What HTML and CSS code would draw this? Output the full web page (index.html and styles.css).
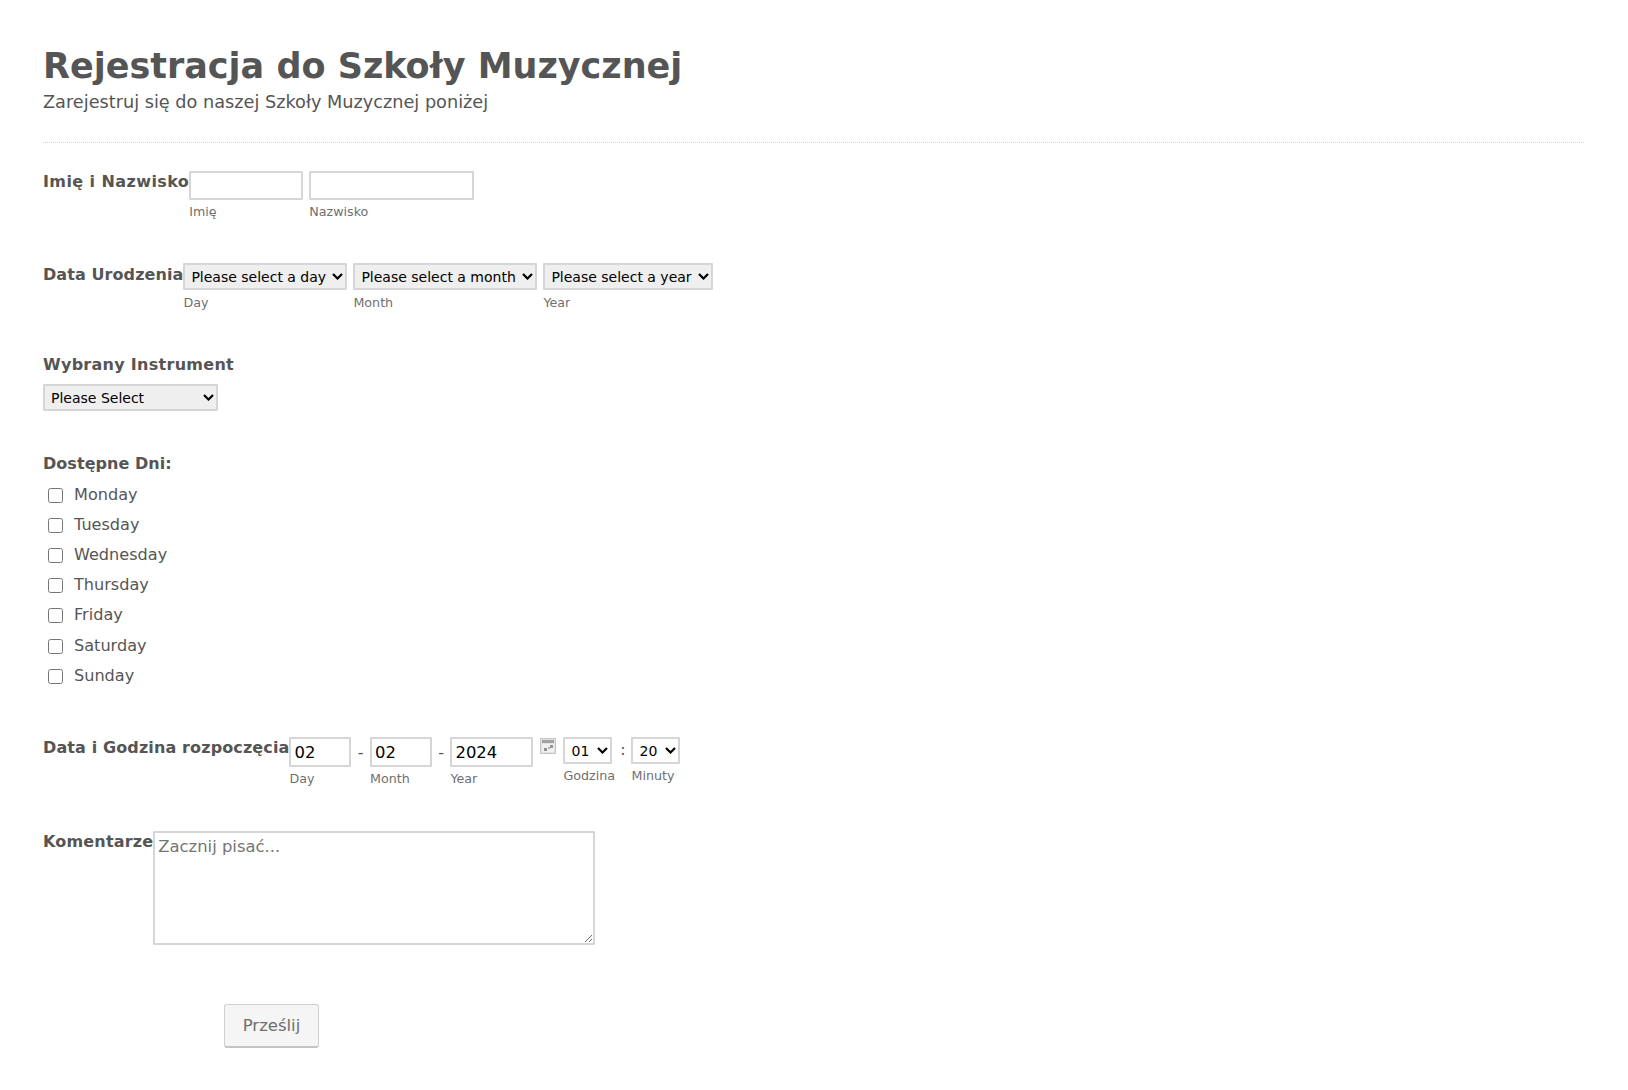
FILE: index.html
```html
<!DOCTYPE html>
<html lang="pl">
<head>
<meta charset="utf-8">
<title>Rejestracja do Szkoły Muzycznej</title>
<link rel="stylesheet" href="styles.css">
</head>
<body>
<form class="form">
  <header class="head">
    <h1 class="title">Rejestracja do Szkoły Muzycznej</h1>
    <p class="subtitle">Zarejestruj się do naszej Szkoły Muzycznej poniżej</p>
  </header>

  <div class="row row-name">
    <label class="label ls-name">Imię i Nazwisko</label>
    <div class="fields gap-6">
      <div class="field"><input class="text w-114" type="text"><span class="sub">Imię</span></div>
      <div class="field"><input class="text w-165" type="text"><span class="sub">Nazwisko</span></div>
    </div>
  </div>

  <div class="row row-birth">
    <label class="label label-low ls-birth">Data Urodzenia</label>
    <div class="fields gap-6">
      <div class="field"><select class="sel w-164"><option>Please select a day</option></select><span class="sub">Day</span></div>
      <div class="field"><select class="sel w-184"><option>Please select a month</option></select><span class="sub">Month</span></div>
      <div class="field"><select class="sel w-170"><option>Please select a year</option></select><span class="sub">Year</span></div>
    </div>
  </div>

  <div class="block block-instr">
    <label class="label ls-instr">Wybrany Instrument</label>
    <select class="sel sel-instr"><option>Please Select</option></select>
  </div>

  <div class="block block-days">
    <label class="label ls-days">Dostępne Dni:</label>
    <ul class="days">
      <li class="day"><input class="check" type="checkbox"><span>Monday</span></li>
      <li class="day"><input class="check" type="checkbox"><span>Tuesday</span></li>
      <li class="day"><input class="check" type="checkbox"><span>Wednesday</span></li>
      <li class="day"><input class="check" type="checkbox"><span>Thursday</span></li>
      <li class="day"><input class="check" type="checkbox"><span>Friday</span></li>
      <li class="day"><input class="check" type="checkbox"><span>Saturday</span></li>
      <li class="day"><input class="check" type="checkbox"><span>Sunday</span></li>
    </ul>
  </div>

  <div class="row row-date">
    <label class="label ls-date">Data i Godzina rozpoczęcia</label>
    <div class="fields">
      <div class="field"><input class="text date w-62" type="text" value="02"><span class="sub">Day</span></div>
      <span class="dash">-</span>
      <div class="field"><input class="text date w-62" type="text" value="02"><span class="sub">Month</span></div>
      <span class="dash">-</span>
      <div class="field"><input class="text date w-83" type="text" value="2024"><span class="sub">Year</span></div>
      <svg class="cal" viewBox="0 0 16 16" aria-hidden="true">
        <rect x="0" y="0" width="16" height="16" rx="1" fill="#c4c4c4"/>
        <rect x="1" y="1" width="14" height="14" fill="#e2e2e2"/>
        <rect x="2" y="2" width="12" height="3" fill="#a2a2a2"/>
        <rect x="2" y="6" width="12" height="8" fill="#f1f1f1"/>
        <rect x="4" y="10" width="3" height="3" fill="#8f8f8f"/>
        <rect x="8" y="9" width="2" height="2" fill="#b0b0b0"/>
        <rect x="10" y="7" width="3" height="3" fill="#949494"/>
      </svg>
      <div class="field field-time"><select class="sel sel-time w-49"><option>01</option></select><span class="sub sub-time">Godzina</span></div>
      <span class="colon">:</span>
      <div class="field field-time"><select class="sel sel-time w-49"><option>20</option></select><span class="sub sub-time">Minuty</span></div>
    </div>
  </div>

  <div class="row row-comment">
    <label class="label ls-comment">Komentarze</label>
    <textarea class="area" placeholder="Zacznij pisać..."></textarea>
  </div>

  <div class="actions">
    <button class="submit" type="button">Prześlij</button>
  </div>
</form>
</body>
</html>
```

FILE: styles.css
```css
* { box-sizing: border-box; }
html, body { margin: 0; padding: 0; background: #fff; }
body {
  height: 1090px;
  overflow: hidden;
  font-family: "DejaVu Sans", Verdana, sans-serif;
  color: #555;
}
.form { padding: 44px 44px 0 43px; }
.head { border-bottom: 1px dotted #d4d4d4; height: 99px; }
.title { margin: 0; font-size: 35px; line-height: 44px; font-weight: 700; color: #555; }
.subtitle { margin: 2px 0 0; font-size: 17.7px; line-height: 24px; color: #555; }

.row { display: flex; align-items: flex-start; }
.label { display: block; font-size: 16px; line-height: 22px; font-weight: 700; color: #555; white-space: nowrap; }
.label-low { padding-top: 1px; }
.ls-name { letter-spacing: 0.41px; }
.ls-birth { letter-spacing: 0.08px; }
.ls-instr { letter-spacing: 0.28px; }
.ls-days { letter-spacing: 0.05px; }
.ls-date { letter-spacing: 0.12px; }
.ls-comment { letter-spacing: 0.18px; }

.fields { display: flex; align-items: flex-start; }
.gap-6 { gap: 6px; }
.field { display: flex; flex-direction: column; align-items: flex-start; }
.sub { font-size: 12.7px; line-height: 16px; color: #6f6f6f; margin-top: 4px; }

.text { display: block; height: 29px; border: 2px solid #d6d6d6; border-radius: 1px; background: #fff; padding: 0 3px; font-family: inherit; color: #000; outline: none; }
.w-114 { width: 114px; }
.w-165 { width: 165px; }
.w-62 { width: 62px; }
.w-83 { width: 83px; }
.w-49 { width: 49px; }
.w-164 { width: 164px; }
.w-184 { width: 184px; }
.w-170 { width: 170px; }
.date { height: 30px; font-size: 16.4px; }

.sel {
  display: block;
  height: 27px;
  margin-bottom: 1px;
  border: 2px solid #d6d6d6;
  border-radius: 1px;
  background-color: #efefef;
  background-image: url("data:image/svg+xml,%3Csvg xmlns='http://www.w3.org/2000/svg' viewBox='0 0 11 7'%3E%3Cpath d='M1 1l4.5 4.5L10 1' fill='none' stroke='%23000' stroke-width='2.2'/%3E%3C/svg%3E");
  background-repeat: no-repeat;
  background-position: right 2px center;
  background-size: 11px 7px;
  color: #000;
  font-family: inherit;
  font-size: 14px;
  padding: 0 15px 0 6px;
  outline: none;
  appearance: none;
  -webkit-appearance: none;
}
.sel-time { background-color: #fff; }
.field-time { width: 51px; }

.row-name { margin-top: 28px; }
.row-birth { margin-top: 43px; }
.block-instr { margin-top: 43px; }
.sel-instr { width: 175px; margin-top: 8px; }
.block-days { margin-top: 42px; }

.days { list-style: none; margin: 4px 0 0; padding: 0; }
.day { display: flex; align-items: center; height: 30.2px; font-size: 16.1px; color: #555; }
.check { width: 15px; height: 15px; margin: 2px 11px 0 5px; }

.row-date { margin-top: 47px; }
.dash { width: 18.5px; text-align: center; margin: 6px 0 0; font-size: 16px; line-height: 20px; }
.cal { width: 16px; height: 16px; margin: 1px 7px 0 7px; }
.colon { width: 17px; text-align: center; font-size: 16px; line-height: 26px; }
.sub-time { margin-top: 3px; }

.row-comment { margin-top: 44px; }
.area { display: block; width: 442px; height: 114px; border: 2px solid #d6d6d6; border-radius: 1px; padding: 4px 3px; font-family: inherit; font-size: 16.4px; color: #555; outline: none; }
.area::placeholder { color: #757575; }

.actions { padding: 59px 0 0 181px; }
.submit { width: 95px; height: 44px; border: 1px solid #cfcfcf; border-bottom: 2px solid #c4c4c4; border-radius: 3px; background: #f5f5f5; font-family: inherit; font-size: 16.5px; color: #6e6e6e; }
```
